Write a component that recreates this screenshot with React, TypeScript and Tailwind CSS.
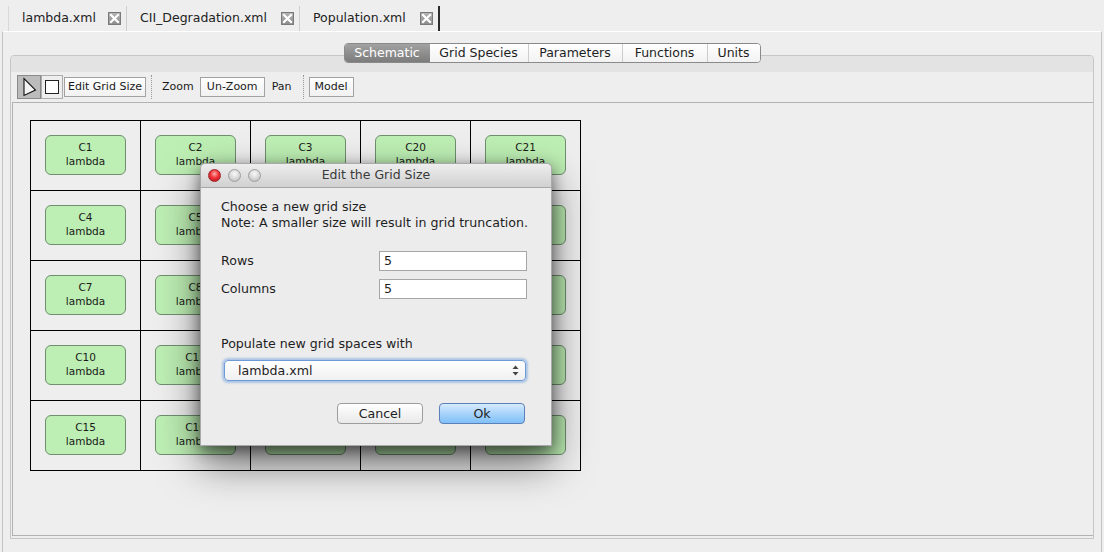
import React from "react";

const FONT = { fontFamily: '"DejaVu Sans", "Liberation Sans", sans-serif' };

function CloseBox() {
  return (
    <svg width="13" height="13" viewBox="0 0 13 13">
      <defs>
        <linearGradient id="cb" x1="0" y1="0" x2="0" y2="1">
          <stop offset="0" stopColor="#b4b4b4" />
          <stop offset="1" stopColor="#8c8c8c" />
        </linearGradient>
      </defs>
      <rect x="0.5" y="0.5" width="12" height="12" fill="url(#cb)" stroke="#7a7a7a" />
      <path d="M3 3 L10 10 M10 3 L3 10" stroke="#ffffff" strokeWidth="2.2" strokeLinecap="square" />
    </svg>
  );
}

function Tab({ label, w, selected, last }: { label: string; w: number; selected?: boolean; last?: boolean }) {
  return (
    <div
      className={`h-[25px] flex items-center justify-between pl-[13px] pr-[5px] text-[12.5px] text-[#222] ${
        last ? "border-r-2 border-[#2a2a2a]" : "border-r border-[#cfcfcf]"
      } ${selected ? "bg-[#eeeeee]" : ""}`}
      style={{ width: w }}
    >
      <span className="pb-[1px]">{label}</span>
      <CloseBox />
    </div>
  );
}

const segments = [
  { label: "Schematic", w: 85, sel: true },
  { label: "Grid Species", w: 98 },
  { label: "Parameters", w: 94 },
  { label: "Functions", w: 85 },
  { label: "Units", w: 53 },
];

function Node({ name }: { name: string }) {
  return (
    <div className="w-[81px] h-[40px] rounded-[6px] border border-[#6f8f6f] bg-[#bdeeb3] flex flex-col items-center justify-center pb-[2px] text-[10.5px] leading-[14px] text-[#1a1a1a]">
      {name ? (
        <>
          <span>{name}</span>
          <span>lambda</span>
        </>
      ) : null}
    </div>
  );
}

// cells whose labels are entirely hidden by the dialog are left without text
const cells = [
  ["C1", "C2", "C3", "C20", "C21"],
  ["C4", "C5", "", "", ""],
  ["C7", "C8", "", "", ""],
  ["C10", "C11", "", "", ""],
  ["C15", "C16", "", "", ""],
];

function ToolButton({ label, w }: { label: string; w: number }) {
  return (
    <div
      className="h-[20px] border border-[#a2a2a2] bg-gradient-to-b from-[#ffffff] to-[#f1f1f1] flex items-center justify-center text-[11px] text-[#1a1a1a]"
      style={{ width: w }}
    >
      {label}
    </div>
  );
}

function DottedSep() {
  return <div className="h-[24px] border-l border-dotted border-[#9a9a9a]" />;
}

export default function App() {
  return (
    <div className="w-[1104px] h-[552px] bg-[#eeeeee] overflow-hidden relative" style={FONT}>
      {/* document tabs */}
      <div className="h-[31px] flex items-end pl-[8px]">
        <div className="flex border-l border-[#d8d8d8]">
          <Tab label="lambda.xml" w={118} />
          <Tab label="CII_Degradation.xml" w={173} />
          <Tab label="Population.xml" w={140} selected last />
        </div>
      </div>

      {/* outer frame */}
      <div className="mx-[2px] h-[521px] border-x border-[#c4c4c4] border-t border-t-white flex flex-col pt-[11px] pl-[7px] pr-[7px]">
        {/* segmented control */}
        <div className="flex justify-center relative z-10 -mb-[8px]">
          <div className="flex h-[20px] rounded-[4px] border border-[#8a8a8a] overflow-hidden bg-white">
            {segments.map((s, i) => (
              <div
                key={s.label}
                className={`h-full flex items-center justify-center text-[12.5px] ${
                  s.sel
                    ? "bg-gradient-to-b from-[#a2a2a2] to-[#7c7c7c] text-white"
                    : "bg-gradient-to-b from-[#ffffff] to-[#f2f2f2] text-[#1e1e1e]"
                } ${i > 0 && !segments[i - 1].sel ? "border-l border-[#cdcdcd]" : ""}`}
                style={{ width: s.w }}
              >
                {s.label}
              </div>
            ))}
          </div>
        </div>

        {/* inner tab panel */}
        <div className="h-[484px] rounded-t-[4px] border border-[#c6c6c6] flex flex-col">
          <div className="h-[16px] bg-[#e3e3e3] rounded-t-[4px]" />
          {/* toolbar */}
          <div className="h-[30px] flex items-center pl-[6px]">
            <div className="w-[24px] h-[24px] bg-[#bcbcbc] border border-[#8a8a8a] flex items-center justify-center">
              <svg width="16" height="20" viewBox="0 0 16 20">
                <path d="M3 1.5 L3 18.5 L14.5 13 Z" fill="#f4f4f4" stroke="#111" strokeWidth="1.1" strokeLinejoin="miter" />
              </svg>
            </div>
            <div className="w-[22px] h-[24px] border border-[#acacac] bg-[#eeeeee] flex items-center justify-center">
              <div className="w-[14px] h-[14px] bg-white border border-[#222]" />
            </div>
            <div className="ml-[1px]">
              <ToolButton label="Edit Grid Size" w={82} />
            </div>
            <div className="ml-[5px]">
              <DottedSep />
            </div>
            <span className="ml-[10px] text-[11px] text-[#1a1a1a]">Zoom</span>
            <div className="ml-[6px]">
              <ToolButton label="Un-Zoom" w={65} />
            </div>
            <span className="ml-[7px] text-[11px] text-[#1a1a1a]">Pan</span>
            <div className="ml-[11px]">
              <DottedSep />
            </div>
            <div className="ml-[5px]">
              <ToolButton label="Model" w={45} />
            </div>
          </div>

          {/* canvas */}
          <div className="flex-1 ml-[1px] mb-[2px] border-t border-l border-b border-[#b2b2b2] pt-[17px] pl-[17px]">
            <div className="w-[551px] border-l border-t border-black grid grid-cols-5">
              {cells.flat().map((c, i) => (
                <div key={i} className="w-[110px] h-[70px] border-r border-b border-black pl-[14px] pt-[14px]">
                  <Node name={c} />
                </div>
              ))}
            </div>
          </div>
        </div>
      </div>

      {/* dialog */}
      <div className="absolute left-[200px] top-[163px] w-[352px] h-[283px] rounded-t-[5px] bg-[#ececec] border border-[#a9a9a9] shadow-[0_4px_14px_rgba(0,0,0,0.45),0_18px_40px_rgba(0,0,0,0.55)] flex flex-col">
        <div className="h-[24px] rounded-t-[5px] bg-gradient-to-b from-[#eeeeee] to-[#d0d0d0] border-b border-[#a8a8a8] flex items-center relative">
          <div className="flex gap-[7px] pl-[7px]">
            <div className="w-[13px] h-[13px] rounded-full border border-[#a0262a] bg-[radial-gradient(circle_at_50%_35%,#ffb0a8_0%,#f0323a_45%,#b01018_100%)]" />
            <div className="w-[13px] h-[13px] rounded-full border border-[#9e9e9e] bg-[radial-gradient(circle_at_50%_35%,#fafafa_0%,#d6d6d6_55%,#b4b4b4_100%)]" />
            <div className="w-[13px] h-[13px] rounded-full border border-[#9e9e9e] bg-[radial-gradient(circle_at_50%_35%,#fafafa_0%,#d6d6d6_55%,#b4b4b4_100%)]" />
          </div>
          <div className="absolute inset-0 flex items-center justify-center text-[12.5px] text-[#3a3a3a] pointer-events-none">
            Edit the Grid Size
          </div>
        </div>
        <div className="flex flex-col pl-[20px] pt-[11px] text-[12.6px] text-[#1e1e1e] leading-[16px]">
          <span>Choose a new grid size</span>
          <span>Note: A smaller size will result in grid truncation.</span>
          <div className="mt-[20px] h-[20px] flex items-center justify-between pr-[24px]">
            <span>Rows</span>
            <div className="w-[148px] h-[20px] border border-[#a6a6a6] bg-white flex items-center pl-[4px]">5</div>
          </div>
          <div className="mt-[8px] h-[20px] flex items-center justify-between pr-[24px]">
            <span>Columns</span>
            <div className="w-[148px] h-[20px] border border-[#a6a6a6] bg-white flex items-center pl-[4px]">5</div>
          </div>
          <span className="mt-[37px]">Populate new grid spaces with</span>
          <div className="mt-[8px] ml-[3px] w-[302px] h-[21px] rounded-[4px] border border-[#6e9ad6] shadow-[0_0_2px_2px_rgba(120,165,225,0.55)] bg-gradient-to-b from-[#ffffff] to-[#f0f0f0] flex items-center justify-between pl-[13px] pr-[6px]">
            <span>lambda.xml</span>
            <svg width="7" height="11" viewBox="0 0 7 11">
              <path d="M3.5 0.5 L6.5 4 L0.5 4 Z" fill="#444" />
              <path d="M3.5 10.5 L6.5 7 L0.5 7 Z" fill="#444" />
            </svg>
          </div>
          <div className="mt-[22px] flex justify-end gap-[16px] pr-[26px]">
            <div className="w-[86px] h-[21px] rounded-[4px] border border-[#9c9c9c] bg-gradient-to-b from-[#ffffff] to-[#e9e9e9] flex items-center justify-center">
              Cancel
            </div>
            <div className="w-[86px] h-[21px] rounded-[4px] border border-[#5d80b8] bg-gradient-to-b from-[#d6ebfd] via-[#a8d3fa] to-[#7fc0f8] flex items-center justify-center">
              Ok
            </div>
          </div>
        </div>
      </div>
    </div>
  );
}
